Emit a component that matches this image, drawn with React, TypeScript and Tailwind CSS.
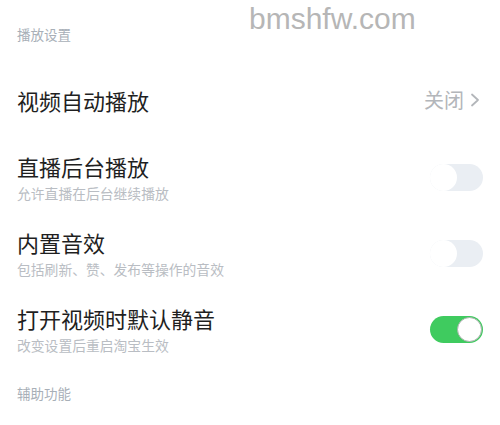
import React from "react";

const cjk = { fontFamily: '"Noto Sans CJK SC", "Noto Sans", sans-serif' };

function Toggle({ on }: { on: boolean }) {
  if (on) {
    return (
      <div className="relative h-[27px] w-[53px] shrink-0 rounded-full bg-[#3fcb5f]">
        <div className="absolute right-[1px] top-[1px] h-[25px] w-[25px] rounded-full border border-[#a9b3ad] bg-white" />
      </div>
    );
  }
  return (
    <div className="relative h-[27px] w-[53px] shrink-0 rounded-full bg-[#eaeef3]">
      <div className="absolute left-0 top-0 h-[27px] w-[27px] rounded-full bg-white" />
    </div>
  );
}

function SwitchRow({
  title,
  sub,
  on,
  className,
}: {
  title: string;
  sub: string;
  on: boolean;
  className: string;
}) {
  return (
    <div className={`flex items-center justify-between ${className}`}>
      <div>
        <div className="text-[22px] leading-[28px] text-[#1f1f1f]">{title}</div>
        <div className="mt-[4px] text-[13.8px] leading-[18px] text-[#b9bdc3]">{sub}</div>
      </div>
      <Toggle on={on} />
    </div>
  );
}

export default function App() {
  return (
    <div className="relative h-[425px] w-[500px] overflow-hidden bg-white" style={cjk}>
      <div
        className="absolute left-[249px] top-[1px] text-[30px] leading-[36px] text-[#b6b6b6]"
        style={{ fontFamily: '"Liberation Sans", Arial, sans-serif' }}
      >
        bmshfw.com
      </div>

      <div className="flex flex-col pl-[17px] pr-[17px] pt-[26px]">
        <div className="text-[13.5px] leading-[16px] text-[#a8afb7]">播放设置</div>

        <div className="mt-[44px] flex items-center justify-between">
          <div className="text-[22px] leading-[28px] text-[#1f1f1f]">视频自动播放</div>
          <div className="mr-[3px] flex items-center gap-[6px] text-[20px] leading-[26px] text-[#b3b6ba]">
            <span>关闭</span>
            <svg width="10" height="14" viewBox="0 0 10 14" fill="none">
              <path d="M2 1.5L8 7L2 12.5" stroke="#b3b6ba" strokeWidth="1.8" strokeLinecap="round" strokeLinejoin="round" />
            </svg>
          </div>
        </div>

        <SwitchRow className="mt-[38px]" title="直播后台播放" sub="允许直播在后台继续播放" on={false} />
        <SwitchRow className="mt-[26px]" title="内置音效" sub="包括刷新、赞、发布等操作的音效" on={false} />
        <SwitchRow className="mt-[26px]" title="打开视频时默认静音" sub="改变设置后重启淘宝生效" on={true} />

        <div className="mt-[31px] text-[13.5px] leading-[16px] text-[#a8afb7]">辅助功能</div>
      </div>
    </div>
  );
}
